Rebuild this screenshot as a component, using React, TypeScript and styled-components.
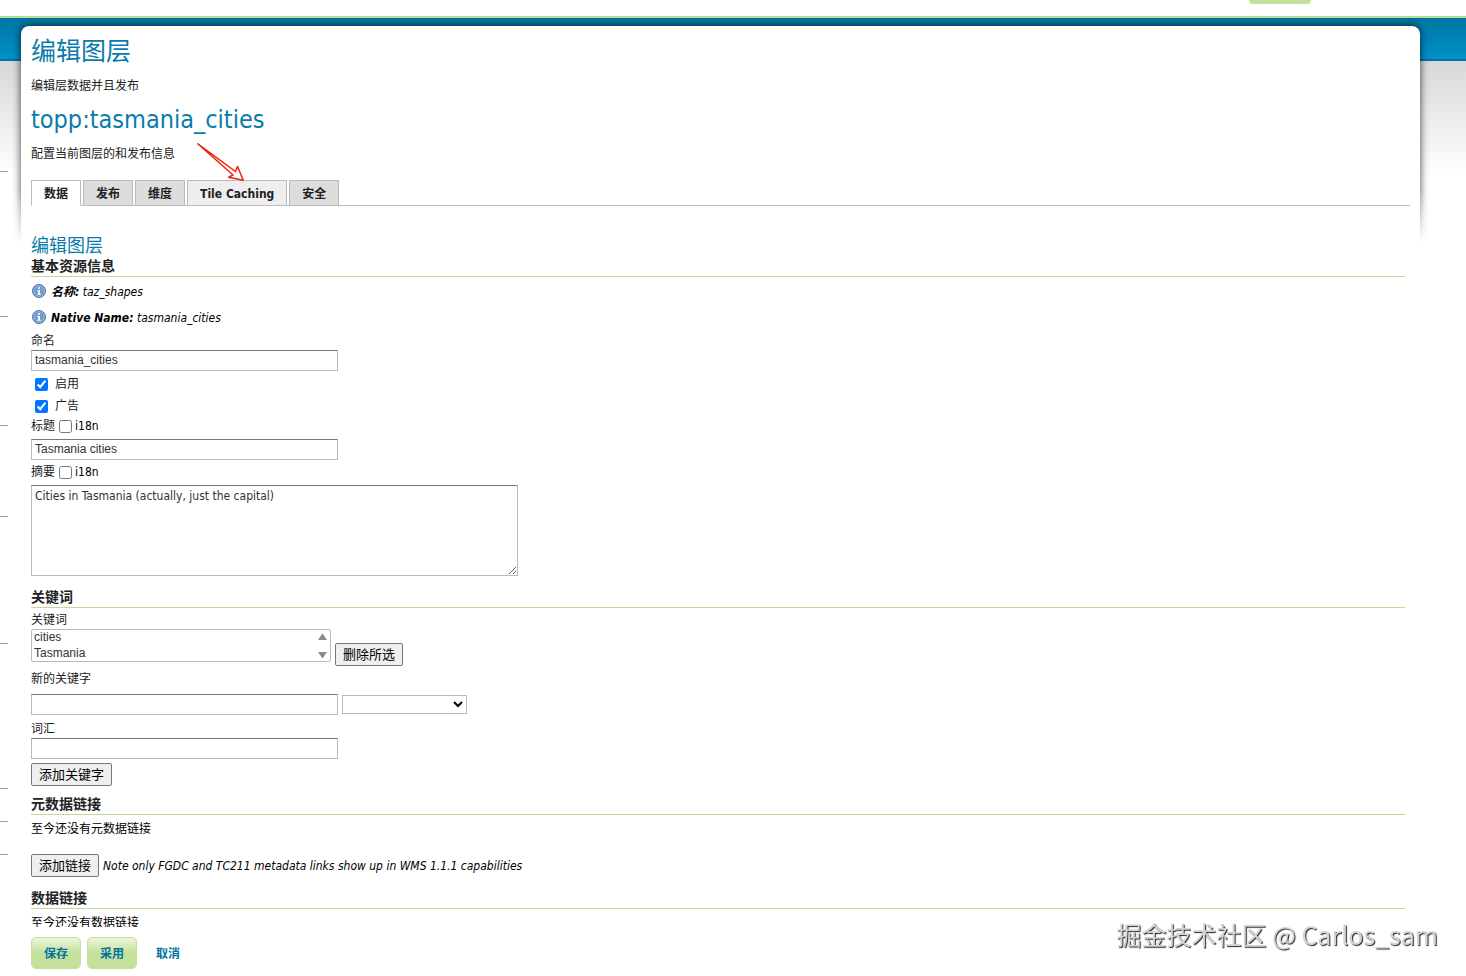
import React from 'react';
import styled, { createGlobalStyle } from 'styled-components';

const sans = '"DejaVu Sans Condensed", "Noto Sans CJK SC", sans-serif';
const arial = '"Liberation Sans", "Noto Sans CJK SC", sans-serif';

const GlobalStyle = createGlobalStyle`
  *, *::before, *::after { box-sizing: border-box; }
  body {
    margin: 0;
    background: #fff;
    color: #222;
    font-family: ${sans};
    font-size: 12px;
    line-height: 18px;
  }
  h1, h2, h3, p { margin: 0; font-weight: 400; }
`;

const Page = styled.div`
  display: flex;
  flex-direction: column;
  height: 100vh;
  overflow: hidden;
  background:
    linear-gradient(#0076a1, #0090c8 41px, #00749f 41px) 0 18px / 100% 43px no-repeat,
    linear-gradient(#d8d8d8, #ffffff) 0 61px / 100% 115px no-repeat;
`;

const Header = styled.header`
  flex: none;
  display: flex;
  justify-content: flex-end;
  align-items: flex-start;
  height: 18px;
  padding-right: 155px;
  border-bottom: 2px solid #b5dc98;
  background: #fff;
`;

const HeaderTab = styled.div`
  width: 62px;
  height: 4px;
  border-radius: 0 0 4px 4px;
  background: #c5e09a;
`;

const Columns = styled.div`
  flex: 1;
  min-height: 0;
  display: flex;
  gap: 13px;
  padding: 8px 46px 0 0;
`;

const Sidebar = styled.aside`
  flex: none;
  width: 8px;
`;

const SidebarSection = styled.div<{ $height: number }>`
  height: ${(p) => p.$height}px;
  border-bottom: 1px solid #a5a58c;
`;

const Panel = styled.main`
  position: relative;
  flex: 1;
  min-width: 0;
  display: flex;
  flex-direction: column;
  padding: 11px 10px 0;
  border-radius: 8px 8px 0 0;
  background: #fff;
`;

const PanelShadow = styled.div`
  position: absolute;
  inset: -8px -10px auto;
  height: 226px;
  overflow: hidden;
  pointer-events: none;
  mask-image: linear-gradient(#000 75%, transparent);

  &::before {
    content: '';
    position: absolute;
    inset: 8px 10px -20px;
    border-radius: 8px 8px 0 0;
    box-shadow: 0 0 8px rgba(0, 0, 0, 0.75);
  }
`;

const PageTitle = styled.h1`
  color: #0a7cab;
  font-size: 25px;
  line-height: 30px;
`;

const Description = styled.p`
  margin: 10px 0;
`;

const TabBar = styled.div`
  position: relative;
  flex: none;
  display: flex;
  gap: 2px;
  margin-top: 7px;
  border-bottom: 1px solid #bbb;
`;

const Tab = styled.button<{ $active?: boolean; $light?: boolean }>`
  height: 26px;
  margin-bottom: -1px;
  padding: 1px 12px 0;
  border: 1px solid #bbb;
  border-bottom-color: ${(p) => (p.$active ? '#fff' : '#bbb')};
  background: ${(p) => (p.$active ? '#fff' : p.$light ? '#eee' : '#ddd')};
  color: #222;
  font: bold 12px/18px ${sans};
`;

const Arrow = styled.svg`
  position: absolute;
  left: 165px;
  top: -38px;
  pointer-events: none;
`;

const Scroller = styled.div`
  flex: 1;
  min-height: 0;
  overflow: hidden;
  padding: 29px 5px 0 0;
`;

const FormTitle = styled.h2`
  color: #0a7cab;
  font-size: 18px;
  line-height: 21px;
`;

const SectionTitle = styled.h3`
  margin-bottom: 3px;
  border-bottom: 1px solid #c8d69b;
  font-size: 14px;
  font-weight: bold;
  line-height: 20px;
`;

const Section = styled.section<{ $top?: number }>`
  margin-top: ${(p) => p.$top ?? 0}px;
`;

const InfoList = styled.div`
  margin-top: -1px;
  color: #000;
  font-style: italic;
  line-height: 26px;
`;

const InfoRow = styled.div`
  display: flex;
  align-items: center;
  gap: 4px;
  svg { flex: none; margin: 0 1px 2px; }
`;

const LabelRow = styled.div<{ $top?: number; $bottom?: number }>`
  display: flex;
  align-items: center;
  height: 18px;
  margin-top: ${(p) => p.$top ?? 0}px;
  margin-bottom: ${(p) => p.$bottom ?? 0}px;
`;

const CheckRow = styled.div`
  display: flex;
  align-items: center;
  gap: 7px;
  height: 22px;
  padding-left: 4px;
`;

const Checks = styled.div`
  margin-top: 2px;
`;

const Check = styled.input`
  width: 13px;
  height: 13px;
  margin: 0;
`;

const I18n = styled.label`
  display: flex;
  align-items: center;
  gap: 3px;
  margin-left: 4px;
  color: #000;
`;

const TextField = styled.input`
  display: block;
  width: 307px;
  height: 21px;
  padding: 0 3px 1px;
  border: 1px solid #bbb;
  border-top-color: #777;
  background: #fff;
  color: #333;
  font: 12px/18px ${arial};
`;

const TextArea = styled.textarea`
  display: block;
  width: 487px;
  height: 91px;
  padding: 1px 3px;
  border: 1px solid #bbb;
  border-top-color: #777;
  background: #fff;
  color: #333;
  font: 12px/18px ${sans};
`;

const Line = styled.div<{ $align?: string }>`
  display: flex;
  align-items: ${(p) => p.$align ?? 'center'};
  gap: 4px;
`;

const LinkLine = styled(Line)`
  margin-top: 16px;
`;

const ListWrap = styled.div`
  position: relative;
  width: 300px;
  height: 33px;
  margin-bottom: 4px;
`;

const ListBox = styled.select`
  display: block;
  width: 100%;
  height: 100%;
  padding: 0;
  border: 1px solid #bbb;
  border-radius: 2px;
  background: #fff;
  color: #333;
  font: 12px/15px ${arial};
  overflow: hidden;
  scrollbar-width: none;
  option { height: 16px; min-height: 16px; padding: 0 2px; }
`;

const ListArrows = styled.svg`
  position: absolute;
  right: 4px;
  top: 4px;
  pointer-events: none;
`;

const Dropdown = styled.select`
  width: 125px;
  height: 19px;
  border: 1px solid #bbb;
  border-radius: 0;
  background: #fff;
  font: 12px/15px ${arial};
`;

const PlainButton = styled.button`
  height: 23px;
  padding: 0 7px;
  border: 1px solid #767676;
  border-radius: 2px;
  background: #efefef;
  color: #000;
  font: 13px/18px ${arial};
  white-space: nowrap;
`;

const AddKeyword = styled(PlainButton)`
  display: block;
  margin-top: 4px;
`;

const EmptyText = styled.p`
  padding-top: 2px;
  color: #000;
`;

const Note = styled.em`
  color: #000;
`;

const Footer = styled.footer`
  flex: none;
  display: flex;
  gap: 6px;
  padding: 10px 0 7px;
`;

const ActionButton = styled.button`
  height: 32px;
  width: 50px;
  padding: 2px 0 0;
  border: 1px solid #c5e09a;
  border-radius: 5px;
  background: linear-gradient(#eef6dc, #c5e09a 50%);
  color: #00749f;
  font: bold 12px/18px ${sans};
`;

const CancelLink = styled.a`
  align-self: center;
  margin-left: 13px;
  padding-top: 2px;
  color: #00749f;
  font-weight: bold;
  text-decoration: none;
`;

const Watermark = styled.div`
  position: fixed;
  right: 28px;
  bottom: 24px;
  color: #d4d4d4;
  font: 25px/36px "Noto Sans CJK SC", sans-serif;
  text-shadow: 1px 1px 1px #222;
  white-space: nowrap;
  pointer-events: none;
`;

function InfoIcon() {
  return (
    <svg width="14" height="14" viewBox="0 0 14 14" aria-hidden="true">
      <circle cx="7" cy="7" r="6.5" fill="#5b87c0" stroke="#4f72a8" />
      <circle cx="7" cy="7" r="5.4" fill="#6f9bd0" stroke="#a9c5e8" strokeWidth="0.8" />
      <path d="M6 3.2h2v1.5H6zM5.4 5.9H8v3.8h.8v1H5.3v-1h.9V6.9h-.8z" fill="#fff" />
    </svg>
  );
}

const sidebarHeights = [146, 145, 109, 91, 127, 145, 33, 33];

export default function App() {
  return (
    <>
      <GlobalStyle />
      <Page>
        <Header>
          <HeaderTab />
        </Header>
        <Columns>
          <Sidebar>
            {sidebarHeights.map((height, i) => (
              <SidebarSection key={i} $height={height} />
            ))}
          </Sidebar>
          <Panel>
            <PanelShadow />
            <PageTitle>编辑图层</PageTitle>
            <Description>编辑层数据并且发布</Description>
            <PageTitle as="h2">topp:tasmania_cities</PageTitle>
            <Description>配置当前图层的和发布信息</Description>
            <TabBar role="tablist">
              <Tab role="tab" aria-selected $active>数据</Tab>
              <Tab role="tab">发布</Tab>
              <Tab role="tab">维度</Tab>
              <Tab role="tab" $light>Tile Caching</Tab>
              <Tab role="tab">安全</Tab>
              <Arrow width="50" height="42" viewBox="0 0 50 42" fill="none" stroke="#ee2211" strokeWidth="1.5" strokeLinejoin="round">
                <path d="M1.8 1.8 L39.5 29.5 L41.5 24.5 L47.3 38.3 L32.5 35.3 L37 33 Z" />
              </Arrow>
            </TabBar>
            <Scroller>
              <FormTitle>编辑图层</FormTitle>
              <Section>
                <SectionTitle>基本资源信息</SectionTitle>
                <InfoList>
                  <InfoRow><InfoIcon /><span><b>名称:</b> taz_shapes</span></InfoRow>
                  <InfoRow><InfoIcon /><span><b>Native Name:</b> tasmania_cities</span></InfoRow>
                </InfoList>
                <LabelRow $top={1}><label htmlFor="name">命名</label></LabelRow>
                <TextField id="name" defaultValue="tasmania_cities" />
                <Checks>
                  <CheckRow><Check id="enabled" type="checkbox" defaultChecked /><label htmlFor="enabled">启用</label></CheckRow>
                  <CheckRow><Check id="advertised" type="checkbox" defaultChecked /><label htmlFor="advertised">广告</label></CheckRow>
                </Checks>
                <LabelRow $bottom={4}>
                  <label htmlFor="title">标题</label>
                  <I18n><Check type="checkbox" />i18n</I18n>
                </LabelRow>
                <TextField id="title" defaultValue="Tasmania cities" />
                <LabelRow $top={3} $bottom={4}>
                  <label htmlFor="abstract">摘要</label>
                  <I18n><Check type="checkbox" />i18n</I18n>
                </LabelRow>
                <TextArea id="abstract" defaultValue="Cities in Tasmania (actually, just the capital)" />
              </Section>
              <Section $top={11}>
                <SectionTitle>关键词</SectionTitle>
                <LabelRow><label htmlFor="keywords">关键词</label></LabelRow>
                <Line $align="flex-end">
                  <ListWrap>
                    <ListBox id="keywords" multiple size={2}>
                      <option>cities</option>
                      <option>Tasmania</option>
                    </ListBox>
                    <ListArrows width="9" height="26" viewBox="0 0 9 26" fill="#8b8b8b" aria-hidden="true">
                      <path d="M4.5 0.5 9 7H0zM0 19h9l-4.5 6.5z" />
                    </ListArrows>
                  </ListWrap>
                  <PlainButton>删除所选</PlainButton>
                </Line>
                <LabelRow $top={4} $bottom={6}><label htmlFor="keyword">新的关键字</label></LabelRow>
                <Line>
                  <TextField id="keyword" />
                  <Dropdown aria-label="语言"><option /></Dropdown>
                </Line>
                <LabelRow $top={5}><label htmlFor="vocabulary">词汇</label></LabelRow>
                <TextField id="vocabulary" />
                <AddKeyword>添加关键字</AddKeyword>
              </Section>
              <Section $top={8}>
                <SectionTitle>元数据链接</SectionTitle>
                <EmptyText>至今还没有元数据链接</EmptyText>
                <LinkLine>
                  <PlainButton>添加链接</PlainButton>
                  <Note>Note only FGDC and TC211 metadata links show up in WMS 1.1.1 capabilities</Note>
                </LinkLine>
              </Section>
              <Section $top={11}>
                <SectionTitle>数据链接</SectionTitle>
                <EmptyText>至今还没有数据链接</EmptyText>
              </Section>
            </Scroller>
            <Footer>
              <ActionButton>保存</ActionButton>
              <ActionButton>采用</ActionButton>
              <CancelLink href="#">取消</CancelLink>
            </Footer>
          </Panel>
        </Columns>
        <Watermark>掘金技术社区 @ Carlos_sam</Watermark>
      </Page>
    </>
  );
}
